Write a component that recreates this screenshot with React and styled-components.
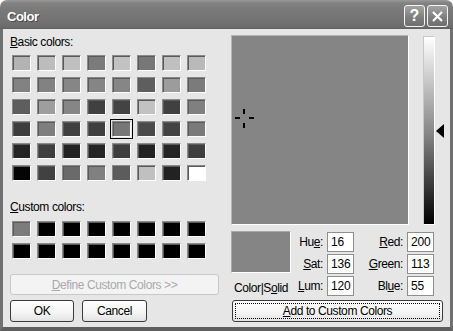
import React from "react";
import styled, { createGlobalStyle } from "styled-components";

const Global = createGlobalStyle`
  html, body { margin: 0; padding: 0; background: #ffffff; }
  body { font-family: "Liberation Sans", Arial, sans-serif; }
  * { box-sizing: border-box; }
`;

const Window = styled.div`
  width: 453px;
  height: 331px;
  display: flex;
  flex-direction: column;
  border-radius: 7px 7px 0 0;
  overflow: hidden;
  font-family: "Liberation Sans", Arial, sans-serif;
  font-size: 12px;
  letter-spacing: -0.4px;
  color: #000;
`;

const TitleBar = styled.div`
  height: 29px;
  flex: none;
  display: flex;
  align-items: center;
  padding: 3px 5px 0 7px;
  background: linear-gradient(to bottom, #9a9a9a 0px, #828282 3px, #797979 10px, #737373 20px, #6c6c6c 27px, #5f5f5f 29px);
`;

const Title = styled.div`
  flex: 1;
  color: #fff;
  font-weight: bold;
  font-size: 13px;
  letter-spacing: -0.5px;
  text-shadow: 1px 1px 0 #4a4a4a;
`;

const TitleButtons = styled.div`
  display: flex;
  gap: 2px;
`;

const TitleButton = styled.div`
  width: 21px;
  height: 22px;
  border: 1px solid #f4f4f4;
  border-radius: 3px;
  background: linear-gradient(to bottom, #a3a3a3, #7d7d7d 60%, #6f6f6f);
  display: flex;
  align-items: center;
  justify-content: center;
  color: #fff;
  font-weight: bold;
  font-size: 16px;
  letter-spacing: 0;
`;

const Frame = styled.div`
  flex: 1;
  display: flex;
  background: #e6e6e6;
  border-left: 3px solid #707070;
  border-right: 3px solid #707070;
  border-bottom: 4px solid #5e5e5e;
  padding: 7px 0 0 7px;
`;

const LeftCol = styled.div`
  width: 208px;
  display: flex;
  flex-direction: column;
`;

const Label = styled.div`
  height: 13px;
  line-height: 13px;
  margin-top: ${(p) => p.$mt || 0}px;
`;

const SwatchGrid = styled.div`
  margin-top: ${(p) => p.$mt}px;
  padding-left: 2px;
  display: grid;
  grid-template-columns: repeat(8, 19px);
  grid-auto-rows: 16px;
  column-gap: 6px;
  row-gap: 6px;
`;

const Swatch = styled.div`
  background: ${(p) => p.$c};
  border-top: 1px solid #8a8a8a;
  border-left: 1px solid #8a8a8a;
  border-bottom: 1px solid #ffffff;
  border-right: 1px solid #ffffff;
  box-shadow: inset 1px 1px 0 #5a5a5a;
  outline: ${(p) => (p.$sel ? "1px solid #000" : "none")};
  outline-offset: 1px;
`;

const PushButton = styled.div`
  height: ${(p) => p.$h || 22}px;
  width: ${(p) => p.$w}px;
  margin-top: ${(p) => p.$mt || 0}px;
  margin-left: ${(p) => p.$ml || 0}px;
  border: 1px solid ${(p) => (p.$disabled ? "#c8c8c8" : "#3a3a3a")};
  border-radius: 3px;
  background: ${(p) =>
    p.$disabled
      ? "#f3f3f3"
      : "linear-gradient(to bottom, #ffffff, #f4f4f4 60%, #e2e2e2)"};
  color: ${(p) => (p.$disabled ? "#a9a9a9" : "#000")};
  display: flex;
  align-items: center;
  justify-content: center;
  position: relative;
  flex: none;
`;

const FocusRing = styled.span`
  position: absolute;
  inset: 2px;
  border: 1px dotted #000;
  border-radius: 1px;
`;

const ButtonRow = styled.div`
  display: flex;
`;

const RightCol = styled.div`
  width: 213px;
  margin-left: 13px;
  display: flex;
  flex-direction: column;
`;

const TopRow = styled.div`
  display: flex;
  margin-top: -1px;
`;

const Spectrum = styled.div`
  width: 178px;
  height: 190px;
  background: #858585;
  border-top: 1px solid #b5b5b5;
  border-left: 1px solid #b5b5b5;
  border-bottom: 1px solid #ffffff;
  border-right: 1px solid #ffffff;
  position: relative;
  flex: none;
`;

const CrossArm = styled.span`
  position: absolute;
  background: #000;
  left: ${(p) => p.$x}px;
  top: ${(p) => p.$y}px;
  width: ${(p) => p.$w}px;
  height: ${(p) => p.$h}px;
`;

const LumWrap = styled.div`
  margin-left: 14px;
  margin-top: 1px;
  position: relative;
`;

const LumBar = styled.div`
  width: 12px;
  height: 189px;
  border-left: 1px solid #c8c8c8;
  border-top: 1px solid #c8c8c8;
  border-right: 1px solid #fff;
  border-bottom: 1px solid #fff;
  background: linear-gradient(to bottom, #ffffff 0%, #858585 52%, #000000 100%);
`;

const Arrow = styled.svg`
  position: absolute;
  left: 13px;
  top: 88px;
`;

const BottomRow = styled.div`
  display: flex;
  margin-top: 6px;
`;

const SolidCol = styled.div`
  width: 60px;
  display: flex;
  flex-direction: column;
  align-items: center;
`;

const SolidBox = styled.div`
  width: 60px;
  height: 42px;
  background: #858585;
  border-top: 1px solid #a8a8a8;
  border-left: 1px solid #a8a8a8;
  border-bottom: 1px solid #fff;
  border-right: 1px solid #fff;
`;

const FieldGrid = styled.div`
  margin-top: 1px;
  display: grid;
  grid-template-columns: 32px 27px 45px 27px;
  grid-auto-rows: 20px;
  column-gap: 4px;
  row-gap: 2px;
`;

const FieldLabel = styled.label`
  display: flex;
  align-items: center;
  justify-content: flex-end;
  white-space: nowrap;
`;

const Field = styled.input`
  width: 27px;
  height: 20px;
  border: 1px solid #8e8e8e;
  background: #fff;
  font: inherit;
  font-size: 12px;
  letter-spacing: -0.2px;
  padding: 0 0 0 3px;
  margin: 0;
  outline: none;
  color: #000;
`;

const basic = [
  ["#b3b3b3", "#bcbcbc", "#bfbfbf", "#7b7b7b", "#c2c2c2", "#777777", "#bfbfbf", "#b9b9b9"],
  ["#828282", "#828282", "#868686", "#858585", "#868686", "#5e5e5e", "#9c9c9c", "#7b7b7b"],
  ["#5e5e5e", "#9e9e9e", "#868686", "#404040", "#434343", "#c2c2c2", "#404040", "#808080"],
  ["#3d3d3d", "#7e7e7e", "#404040", "#3f3f3f", "#777777", "#4a4a4a", "#434343", "#7a7a7a"],
  ["#252525", "#3e3e3e", "#222222", "#252525", "#3e3e3e", "#222222", "#252525", "#3e3e3e"],
  ["#050505", "#414141", "#6a6a6a", "#808080", "#5c5c5c", "#c0c0c0", "#222222", "#ffffff"],
];

const custom = ["#7c7c7c", ...Array(15).fill("#000000")];

const fields = [
  [<>Hu<u>e</u>:</>, "16", <><u>R</u>ed:</>, "200"],
  [<><u>S</u>at:</>, "136", <><u>G</u>reen:</>, "113"],
  [<><u>L</u>um:</>, "120", <>Bl<u>u</u>e:</>, "55"],
];

export default function App() {
  return (
    <>
      <Global />
      <Window>
        <TitleBar>
          <Title>Color</Title>
          <TitleButtons>
            <TitleButton>?</TitleButton>
            <TitleButton>
              <svg width="13" height="13" viewBox="0 0 13 13">
                <path d="M2 2 L11 11 M11 2 L2 11" stroke="#fff" strokeWidth="2.2" />
              </svg>
            </TitleButton>
          </TitleButtons>
        </TitleBar>
        <Frame>
          <LeftCol>
            <Label>
              <u>B</u>asic colors:
            </Label>
            <SwatchGrid $mt={6}>
              {basic.flat().map((c, i) => (
                <Swatch key={i} $c={c} $sel={i === 28} />
              ))}
            </SwatchGrid>
            <Label $mt={20}>
              <u>C</u>ustom colors:
            </Label>
            <SwatchGrid $mt={7}>
              {custom.map((c, i) => (
                <Swatch key={i} $c={c} />
              ))}
            </SwatchGrid>
            <PushButton $w={209} $h={21} $mt={15} $disabled>
              <span>
                <u>D</u>efine Custom Colors &gt;&gt;
              </span>
            </PushButton>
            <ButtonRow>
              <PushButton $w={64} $mt={5}>OK</PushButton>
              <PushButton $w={65} $mt={5} $ml={8}>Cancel</PushButton>
            </ButtonRow>
          </LeftCol>
          <RightCol>
            <TopRow>
              <Spectrum>
                <CrossArm $x={11} $y={73} $w={2} $h={5} />
                <CrossArm $x={11} $y={87} $w={2} $h={5} />
                <CrossArm $x={3} $y={81} $w={5} $h={2} />
                <CrossArm $x={17} $y={81} $w={5} $h={2} />
              </Spectrum>
              <LumWrap>
                <LumBar />
                <Arrow width="9" height="14" viewBox="0 0 9 14">
                  <path d="M0 7 L8 0 L8 14 Z" fill="#000" />
                </Arrow>
              </LumWrap>
            </TopRow>
            <BottomRow>
              <SolidCol>
                <SolidBox />
                <Label $mt={9}>
                  Color|S<u>o</u>lid
                </Label>
              </SolidCol>
              <FieldGrid>
                {fields.map((r, i) => (
                  <React.Fragment key={i}>
                    <FieldLabel>{r[0]}</FieldLabel>
                    <Field readOnly value={r[1]} />
                    <FieldLabel>{r[2]}</FieldLabel>
                    <Field readOnly value={r[3]} />
                  </React.Fragment>
                ))}
              </FieldGrid>
            </BottomRow>
            <PushButton $w={211} $mt={4} $ml={1}>
              <FocusRing />
              <span>
                <u>A</u>dd to Custom Colors
              </span>
            </PushButton>
          </RightCol>
        </Frame>
      </Window>
    </>
  );
}
